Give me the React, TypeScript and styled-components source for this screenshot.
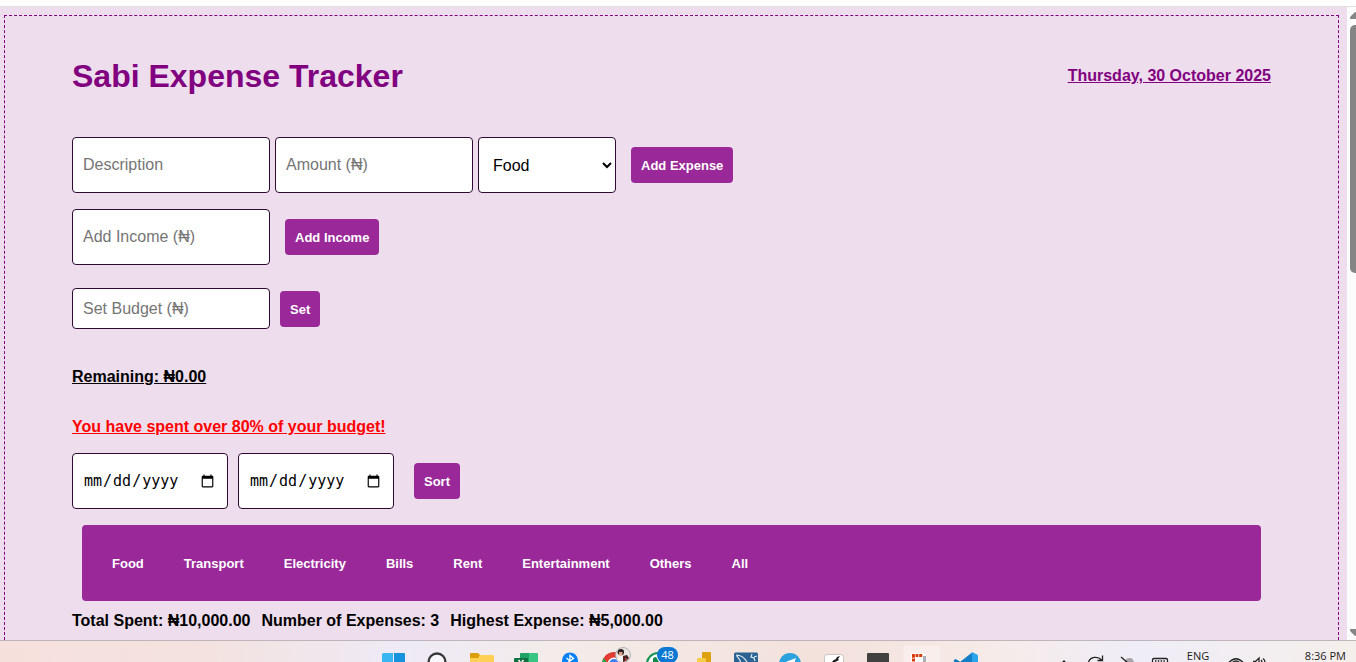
import React from "react";
import styled, { createGlobalStyle } from "styled-components";

const GlobalStyle = createGlobalStyle`
  *, *::before, *::after { box-sizing: border-box; }
  body {
    margin: 0;
    background: #eeddec;
    color: #000;
    font-family: "Liberation Sans", Arial, sans-serif;
    font-size: 16px;
    line-height: 18px;
  }
`;

const Screen = styled.div`
  display: flex;
  flex-direction: column;
  height: 100vh;
  overflow: hidden;
`;

const BrowserEdge = styled.div`
  flex: none;
  height: 7px;
  background: #fff;
  border-bottom: 1px solid #dfe0df;
`;

const Viewport = styled.div`
  flex: 1;
  min-height: 0;
  display: flex;
`;

const Page = styled.main`
  flex: 1;
  min-width: 0;
  display: flex;
  flex-direction: column;
  padding: 8px 8px 0 4px;
  overflow: hidden;
`;

const Panel = styled.div`
  flex: 1 0 auto;
  border: 1px dashed purple;
  border-bottom: 0;
  padding: 42px 67px 0;
`;

const Header = styled.header`
  display: flex;
  align-items: center;
  justify-content: space-between;
  color: purple;
  margin-bottom: 43px;
`;

const Title = styled.h1`
  margin: 0;
  font-size: 32px;
  line-height: 36px;
`;

const Today = styled.p`
  margin: 0;
  font-weight: bold;
  text-decoration: underline;
`;

const FormRow = styled.form<{ $gap: number; $top?: number }>`
  display: flex;
  align-items: center;
  gap: ${(p) => p.$gap}px;
  margin-top: ${(p) => p.$top ?? 0}px;
`;

const Fields = styled.div<{ $gap: number }>`
  display: flex;
  gap: ${(p) => p.$gap}px;
`;

const TextField = styled.input<{ $compact?: boolean }>`
  width: 198px;
  height: ${(p) => (p.$compact ? 41 : 56)}px;
  padding: 0 10px;
  background: #fff;
  border: 1px solid #2f0a33;
  border-radius: 4px;
  font-family: inherit;
  font-size: 16px;
  &::placeholder { color: #757575; }
`;

const DateField = styled(TextField)`
  width: 156px;
  font-family: "DejaVu Sans Mono", monospace;
  font-size: 15px;
`;

const CategorySelect = styled.select`
  width: 138px;
  height: 56px;
  padding: 0 0 0 10px;
  background: #fff;
  color: #000;
  border: 1px solid #2f0a33;
  border-radius: 4px;
  font-family: inherit;
  font-size: 16px;
`;

const Button = styled.button`
  padding: 11px 10px 9px;
  background: #9a2899;
  color: #fff;
  border: 0;
  border-radius: 4px;
  font-family: inherit;
  font-size: 13px;
  font-weight: bold;
  line-height: 16px;
  cursor: pointer;
`;

const Notice = styled.p<{ $top: number; $warning?: boolean }>`
  margin: ${(p) => p.$top}px 0 0;
  color: ${(p) => (p.$warning ? "#f00" : "#000")};
  font-weight: bold;
  text-decoration: underline;
`;

const Filters = styled.nav`
  display: flex;
  margin: 16px 10px 11px;
  padding: 20px 10px;
  background: #9a2899;
  border-radius: 4px;
`;

const FilterButton = styled(Button)`
  padding: 11px 20px 9px;
  background: transparent;
`;

const Summary = styled.div`
  display: flex;
  gap: 11px;
  font-weight: bold;
`;

const Scrollbar = styled.div`
  flex: none;
  width: 9px;
  padding: 5px 0 4px 3px;
  display: flex;
  flex-direction: column;
  background: #fcfcfc;
  overflow: hidden;
`;

const ScrollArrow = styled.svg`
  flex: none;
  display: block;
  width: 12px;
  height: 7px;
  fill: #858585;
`;

const ScrollTrack = styled.div`
  flex: 1;
  padding-top: 6px;
`;

const ScrollThumb = styled.div`
  width: 12px;
  height: 41%;
  background: #858585;
  border-radius: 5px;
`;

const Taskbar = styled.footer`
  flex: none;
  height: 22px;
  display: grid;
  grid-template-columns: 1fr auto 1fr;
  border-top: 1px solid #bdb5ba;
  background: linear-gradient(90deg, #f6e0dc 0%, #f3e2df 15%, #eeeaf6 30%, #f4ece9 42%, #f3e1db 60%, #f6ebe8 73%, #efedf7 84%, #f5efeb 100%);
  overflow: hidden;
`;

const Apps = styled.div`
  grid-column: 2;
  display: flex;
  padding-left: 4px;
`;

const AppIcon = styled.svg`
  display: block;
  width: 44px;
  height: 21px;
`;

const Tray = styled.div`
  grid-column: 3;
  display: flex;
  justify-content: flex-end;
  padding-right: 10px;
  font-family: "Open Sans", sans-serif;
  font-size: 11px;
  line-height: 12px;
  color: #1c1c1c;
`;

const TrayIcon = styled.svg<{ $w?: number }>`
  display: block;
  flex: none;
  width: ${(p) => p.$w ?? 32}px;
  height: 21px;
  fill: none;
  stroke: #222;
  stroke-width: 1.3;
`;

const TrayText = styled.span<{ $w: number; $end?: boolean }>`
  width: ${(p) => p.$w}px;
  padding-top: 9px;
  text-align: ${(p) => (p.$end ? "right" : "center")};
`;

const categories = ["Food", "Transport", "Electricity", "Bills", "Rent", "Entertainment", "Others"];

const stay = (e: React.FormEvent) => e.preventDefault();

function TaskbarApps() {
  return (
    <Apps aria-hidden="true">
      <AppIcon viewBox="0 0 44 21">
        <path d="M10 13.5q0-1.500 1.500-1.500H21v10H10z" fill="#38b6f1" />
        <path d="M22 12h10q1 0 1 1v9H22z" fill="#1792dc" />
      </AppIcon>
      <AppIcon viewBox="0 0 44 21">
        <circle cx="21" cy="21" r="8.500" fill="#f8f7fb" stroke="#383838" strokeWidth="2.300" />
      </AppIcon>
      <AppIcon viewBox="0 0 44 21">
        <path d="M10 18v-5q0-1 1-1h7l2 2v4z" fill="#dc9f0c" />
        <path d="M10 17h8l2-3h13q1 0 1 1v6H10z" fill="#ffd056" />
      </AppIcon>
      <AppIcon viewBox="0 0 44 21">
        <path d="M16 13q0-1 1-1h8v9h-9z" fill="#21a366" />
        <path d="M25 12h8q1 0 1 1v8h-9z" fill="#38c682" />
        <path d="M10 18q0-1 1-1h12q1 0 1 1v3H10z" fill="#107040" />
        <path d="M14.500 19l3 4m2-4l-3 4" stroke="#fff" strokeWidth="1.500" />
      </AppIcon>
      <AppIcon viewBox="0 0 44 21">
        <rect x="14" y="11.500" width="16" height="20" rx="8" fill="#0780f8" />
        <path d="M18.500 17l7 6M22 22v-7.500l3.500 3-7 5" fill="none" stroke="#fff" strokeWidth="1.300" />
      </AppIcon>
      <AppIcon viewBox="0 0 44 21">
        <circle cx="22" cy="23" r="12" fill="#e13b32" />
        <path d="M10 23a12 12 0 0 1 1.700-6l6 8z" fill="#2aa650" />
        <circle cx="22" cy="23" r="6.500" fill="#fff" />
        <circle cx="22" cy="23" r="5" fill="#3f7ff0" />
        <circle cx="31" cy="14" r="7.500" fill="#e8e5e3" stroke="#a5a1a1" strokeWidth="0.800" />
        <path d="M25.500 12q0-4 3.500-4t3 4l-1 2h-4z" fill="#29201f" />
        <path d="M27 11h3.500v3.500H27z" fill="#dca48c" />
        <path d="M25 20l2-5h4l2 6z" fill="#f5f2f0" />
        <path d="M31 15l4-1 2 3-3 3-3 1z" fill="#4a2423" />
        <path d="M33 17l2 1-2 2z" fill="#d24338" />
      </AppIcon>
      <AppIcon viewBox="0 0 44 21">
        <circle cx="22" cy="23" r="11" fill="#fff" stroke="#179351" strokeWidth="2.200" />
        <path d="M17 21q-1-5 3-5l3 5" fill="#14894b" />
        <rect x="21" y="6" width="21" height="16" rx="8" fill="#0a78d2" />
        <text x="31.500" y="18" fill="#fff" fontSize="11" fontFamily="Open Sans, sans-serif" textAnchor="middle">48</text>
      </AppIcon>
      <AppIcon viewBox="0 0 44 21">
        <path d="M22 12q0-1 1-1h7q1 0 1 1v9h-9z" fill="#dda00e" />
        <path d="M17 18q0-1 1-1h7q1 0 1 1v3h-9z" fill="#f4cc48" />
      </AppIcon>
      <AppIcon viewBox="0 0 44 21">
        <rect x="10" y="11.500" width="24" height="24" rx="1.500" fill="#2b6291" />
        <path d="M12 14c5 0 8 2 11 7M12.500 14c1 3 3 3 4 7M28 13l-1 3 3 1 1 3M30 16l3-1" fill="none" stroke="#dcebf5" strokeWidth="1.200" />
      </AppIcon>
      <AppIcon viewBox="0 0 44 21">
        <circle cx="22" cy="23" r="11" fill="#2ba2dd" />
        <path d="M15 22l13-5-2 6H15z" fill="#fff" />
      </AppIcon>
      <AppIcon viewBox="0 0 44 21">
        <rect x="12.500" y="13.500" width="19" height="19" rx="3" fill="#fff" stroke="#c9c2c0" />
        <path d="M20 21q1-2 4-3l1-2 3-1-2 3 1 1-4 2z" fill="#161616" />
      </AppIcon>
      <AppIcon viewBox="0 0 44 21">
        <rect x="11" y="12" width="22" height="20" rx="1" fill="#414141" />
      </AppIcon>
      <AppIcon viewBox="0 0 44 21">
        <rect x="3" y="4" width="38" height="38" rx="3" fill="#f9eeeb" stroke="#efe3df" strokeWidth="0.600" />
        <path d="M11 21v-8q0-1 1-1h11q2 0 3 3v6z" fill="#fff" />
        <path d="M23 15h3v6h-3z" fill="#a9b0b5" />
        <path d="M12 14.500h11M13.500 14v7" fill="none" stroke="#d83b0c" strokeWidth="3" strokeDasharray="2.800 0.800" />
      </AppIcon>
      <AppIcon viewBox="0 0 44 21">
        <path d="M9.500 19.500l2-1.500 5 3h-6z" fill="#0d76bb" />
        <path d="M28 11.500v9.500H16z" fill="#137fc6" />
        <path d="M28 11l5 2.500q1 .5 1 1.500v6h-6z" fill="#2aa4ed" />
      </AppIcon>
    </Apps>
  );
}

function SystemTray() {
  return (
    <Tray>
      <TrayIcon aria-hidden="true"><path d="M12 24l4-4 4 4" /></TrayIcon>
      <TrayIcon aria-hidden="true"><path d="M8.500 21a7.500 7 0 0 1 13-2M22.500 14.500v5h-5" /></TrayIcon>
      <TrayIcon aria-hidden="true">
        <path d="M13 21q0-4 5-4 3 0 4 4" fill="#aaa4aa" stroke="none" />
        <path d="M9 16l7 6" />
      </TrayIcon>
      <TrayIcon aria-hidden="true">
        <rect x="8.500" y="17.500" width="15" height="11" rx="1.500" />
        <path d="M11 20h11" strokeDasharray="1.500 1.300" />
      </TrayIcon>
      <TrayText $w={44}>ENG</TrayText>
      <TrayIcon aria-hidden="true">
        <path d="M8.500 22q7.500-8.500 15 0M12 22q4-4 8 0" />
      </TrayIcon>
      <TrayIcon $w={16} aria-hidden="true">
        <path d="M1 20.500h2.500L7 17v5M9 19q1 1 1 3M11 17.500q2 1.500 2 4" />
      </TrayIcon>
      <TrayText $w={78} $end>8:36 PM</TrayText>
    </Tray>
  );
}

export default function App() {
  return (
    <Screen>
      <GlobalStyle />
      <BrowserEdge />
      <Viewport>
        <Page>
          <Panel>
            <Header>
              <Title>Sabi Expense Tracker</Title>
              <Today>Thursday, 30 October 2025</Today>
            </Header>

            <FormRow $gap={15} onSubmit={stay}>
              <Fields $gap={5}>
                <TextField placeholder="Description" aria-label="Description" />
                <TextField placeholder="Amount (₦)" aria-label="Amount" inputMode="decimal" />
                <CategorySelect aria-label="Category" defaultValue="Food">
                  {categories.map((c) => (
                    <option key={c}>{c}</option>
                  ))}
                </CategorySelect>
              </Fields>
              <Button>Add Expense</Button>
            </FormRow>

            <FormRow $gap={15} $top={16} onSubmit={stay}>
              <TextField placeholder="Add Income (₦)" aria-label="Income" inputMode="decimal" />
              <Button>Add Income</Button>
            </FormRow>

            <FormRow $gap={10} $top={23} onSubmit={stay}>
              <TextField $compact placeholder="Set Budget (₦)" aria-label="Budget" inputMode="decimal" />
              <Button>Set</Button>
            </FormRow>

            <Notice $top={39}>Remaining: ₦0.00</Notice>
            <Notice $top={32} $warning>You have spent over 80% of your budget!</Notice>

            <FormRow $gap={20} $top={17} onSubmit={stay}>
              <Fields $gap={10}>
                <DateField type="date" aria-label="From date" />
                <DateField type="date" aria-label="To date" />
              </Fields>
              <Button>Sort</Button>
            </FormRow>

            <Filters aria-label="Filter by category">
              {[...categories, "All"].map((c) => (
                <FilterButton key={c} type="button">{c}</FilterButton>
              ))}
            </Filters>

            <Summary>
              <span>Total Spent: ₦10,000.00</span>
              <span>Number of Expenses: 3</span>
              <span>Highest Expense: ₦5,000.00</span>
            </Summary>
          </Panel>
        </Page>
        <Scrollbar aria-hidden="true">
          <ScrollArrow viewBox="0 0 12 7"><path d="M0 6q0-1 1-2l3-3q2-2 4 0l3 3q1 1 1 2v1H0z" /></ScrollArrow>
          <ScrollTrack><ScrollThumb /></ScrollTrack>
          <ScrollArrow viewBox="0 0 12 7"><path d="M0 0h12v1q0 1-1 2L8 6q-2 2-4 0L1 3Q0 2 0 1z" /></ScrollArrow>
        </Scrollbar>
      </Viewport>
      <Taskbar>
        <TaskbarApps />
        <SystemTray />
      </Taskbar>
    </Screen>
  );
}
